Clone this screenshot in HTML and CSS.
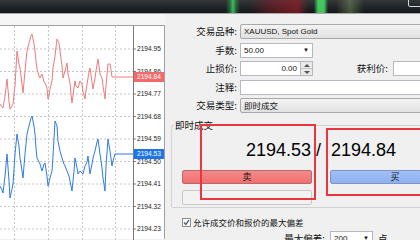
FILE: index.html
```html
<!DOCTYPE html>
<html lang="zh-CN">
<head>
<meta charset="utf-8">
<title>下单</title>
<link rel="stylesheet" href="styles.css">
</head>
<body>
<div class="topbar"><span class="winbtn"></span></div>
<div class="main">
  <div class="chart">
    <svg class="chart-svg" width="164" height="215" viewBox="0 0 164 215">
      <g class="grid">
        <line x1="0" y1="23" x2="133" y2="23"/>
        <line x1="0" y1="45.5" x2="133" y2="45.5"/>
        <line x1="0" y1="68" x2="133" y2="68"/>
        <line x1="0" y1="90.5" x2="133" y2="90.5"/>
        <line x1="0" y1="113" x2="133" y2="113"/>
        <line x1="0" y1="135.5" x2="133" y2="135.5"/>
        <line x1="0" y1="158" x2="133" y2="158"/>
        <line x1="0" y1="180.5" x2="133" y2="180.5"/>
        <line x1="0" y1="203" x2="133" y2="203"/>
        <line x1="14.5" y1="0" x2="14.5" y2="215"/>
        <line x1="48.5" y1="0" x2="48.5" y2="215"/>
        <line x1="82.5" y1="0" x2="82.5" y2="215"/>
        <line x1="115.5" y1="0" x2="115.5" y2="215"/>
      </g>
      <polyline class="ask-line" points="0,78 2,81 3,82 5,70 7,53 9,75 10,83 12,80 13,78 15,60 17,25 19,38 20,42 22,58 23,67 25,45 27,25 29,17 31,10 32,8 34,18 35,25 36,35 37,43 39,50 40,52 42,48 44,56 45,57 47,62 48,73 49,70 50,63 52,55 53,42 55,30 57,13 59,17 60,25 62,40 63,52 65,45 67,37 68,48 70,57 71,68 72,77 74,62 75,55 76,60 78,62 80,55 82,58 83,66 85,73 86,65 88,52 89,46 90,42 92,56 93,63 95,52 96,45 98,33 99,40 100,48 102,52 103,60 105,73 106,60 108,38 110,38 111,44 112,51 133,51"/>
      <polyline class="bid-line" points="0,160 2,164 3,167 5,150 7,128 9,155 10,172 12,163 13,158 15,128 17,108 19,120 20,132 22,145 23,152 25,128 27,108 29,100 31,92 32,90 34,100 35,108 36,122 37,132 39,136 40,138 42,145 44,138 45,137 47,150 48,160 50,152 52,145 53,130 55,95 57,100 58,115 60,125 62,132 64,138 65,140 67,145 69,150 71,160 72,165 74,145 75,132 77,142 78,148 80,145 83,148 85,140 87,136 88,130 89,140 90,148 92,138 93,132 95,125 97,116 98,113 100,128 102,142 103,152 105,165 106,140 108,113 110,125 112,140 113,135 115,128 133,128"/>
      <line class="axis" x1="133.5" y1="0" x2="133.5" y2="215"/>
      <g class="ticks">
        <line x1="133" y1="23" x2="136" y2="23"/>
        <line x1="133" y1="45.5" x2="136" y2="45.5"/>
        <line x1="133" y1="68" x2="136" y2="68"/>
        <line x1="133" y1="90.5" x2="136" y2="90.5"/>
        <line x1="133" y1="113" x2="136" y2="113"/>
        <line x1="133" y1="135.5" x2="136" y2="135.5"/>
        <line x1="133" y1="158" x2="136" y2="158"/>
        <line x1="133" y1="180.5" x2="136" y2="180.5"/>
        <line x1="133" y1="203" x2="136" y2="203"/>
      </g>
      <g class="labels">
        <text x="137" y="25.3">2194.95</text>
        <text x="137" y="47.8">2194.86</text>
        <text x="137" y="70.3">2194.77</text>
        <text x="137" y="92.8">2194.68</text>
        <text x="137" y="115.3">2194.59</text>
        <text x="137" y="137.8">2194.50</text>
        <text x="137" y="160.3">2194.41</text>
        <text x="137" y="182.8">2194.32</text>
        <text x="137" y="205.3">2194.23</text>
      </g>
      <rect class="ask-tag" x="134" y="46" width="30" height="10"/>
      <text class="tag-text" x="137" y="53.3">2194.84</text>
      <rect class="bid-tag" x="134" y="123" width="30" height="10"/>
      <text class="tag-text" x="137" y="130.3">2194.53</text>
    </svg>
  </div>
  <div class="panel">
    <div class="form">
      <span class="lbl">交易品种:</span>
      <div class="combo">XAUUSD, Spot Gold</div>
      <span class="lbl">手数:</span>
      <div class="field">
        <div class="input lots"><span class="val">50.00</span><span class="arrow">▼</span></div>
      </div>
      <span class="lbl">止损价:</span>
      <div class="field">
        <div class="input sl">0.00</div>
        <div class="spin"><span class="up"></span><span class="down"></span></div>
        <span class="lbl tp-lbl">获利价:</span>
        <div class="input tp"></div>
      </div>
      <span class="lbl">注释:</span>
      <div class="input comment"></div>
      <span class="lbl">交易类型:</span>
      <div class="combo cjk">即时成交</div>
    </div>
    <fieldset class="group">
      <legend class="group-title">即时成交</legend>
      <div class="prices">
        <span class="bid">2194.53</span>
        <span class="slash">/</span>
        <span class="ask">2194.84</span>
      </div>
      <div class="btns">
        <div class="btn sell">卖</div>
        <div class="btn buy">买</div>
      </div>
      <div class="blank"></div>
    </fieldset>
    <div class="check">
      <svg class="cbox" width="9" height="9" viewBox="0 0 9 9"><rect x="0.5" y="0.5" width="8" height="8" fill="#fff" stroke="#8e8f8f"/><path d="M2 4.5 L3.8 6.5 L7 2.2" fill="none" stroke="#4a5a78" stroke-width="1.3"/></svg>
      <span>允许成交价和报价的最大偏差</span>
    </div>
    <div class="dev">
      <span class="lbl dev-lbl">最大偏差:</span>
      <div class="input devin"><span class="val">200</span><span class="arrow">▼</span></div>
      <span class="unit">点</span>
    </div>
  </div>
</div>
<div class="mark m1"></div>
<div class="mark m2"></div>
</body>
</html>
```

FILE: styles.css
```css
* { box-sizing: border-box; }
html, body {
  margin: 0;
  width: 420px;
  height: 240px;
  overflow: hidden;
}
body {
  position: relative;
  background: #f0f0f0;
  font-family: "Noto Sans CJK SC", "Liberation Sans", sans-serif;
  color: #111;
}
.topbar {
  height: 13px;
  display: flex;
  justify-content: flex-end;
  background:
    linear-gradient(90deg, transparent 226px, rgba(40,160,70,.55) 230px, rgba(70,210,100,.85) 233px, rgba(40,160,70,.5) 236px, transparent 240px),
    linear-gradient(90deg, transparent 250px, rgba(140,25,35,.45) 270px, rgba(170,30,40,.6) 298px, transparent 308px),
    linear-gradient(90deg, transparent 314px, rgba(70,215,100,.9) 318px, rgba(70,215,100,.9) 324px, transparent 328px),
    linear-gradient(90deg, transparent 336px, rgba(130,160,100,.45) 350px, transparent 364px),
    linear-gradient(#33373a, #141618);
}
.winbtn {
  width: 16px;
  height: 9px;
  margin-top: -2px;
  margin-right: -4px;
  border: 1px solid #d8d8d8;
  border-radius: 2px;
}
.main {
  display: flex;
  border-top: 1px solid #a9a9a9;
  background: #f5f5f5;
  height: 226px;
}
.chart {
  flex: none;
  width: 165px;
  margin-top: 11px;
  background: #fff;
  border-top: 1px solid #a0a0a0;
  border-right: 1px solid #a0a0a0;
}
.chart-svg { display: block; }
.grid line {
  stroke: #c6c6c6;
  stroke-width: 1;
  stroke-dasharray: 2 2;
}
.axis { stroke: #7a7a7a; stroke-width: 1; }
.ticks line { stroke: #7a7a7a; }
.ask-line { fill: none; stroke: #f07a7a; stroke-width: 1; }
.bid-line { fill: none; stroke: #2f7be6; stroke-width: 1; }
.labels text {
  font-family: "Liberation Sans", sans-serif;
  font-size: 6.6px;
  fill: #222;
}
.ask-tag { fill: #f26a6a; }
.bid-tag { fill: #1f74e8; }
.tag-text {
  font-family: "Liberation Sans", sans-serif;
  font-size: 6.6px;
  fill: #fff;
}
.panel {
  flex: none;
  width: 300px;
  padding-top: 10px;
  background: #f0f0f0;
}
.form {
  display: grid;
  grid-template-columns: 72px 1fr;
  column-gap: 3px;
  row-gap: 3.5px;
  grid-auto-rows: 15px;
  align-items: center;
}
.lbl {
  font-size: 9.5px;
  text-align: right;
  white-space: nowrap;
  line-height: 15px;
}
.combo, .input {
  height: 15px;
  font-family: "Liberation Sans", "Noto Sans CJK SC", sans-serif;
  font-size: 8px;
  line-height: 13px;
  padding: 0 3px;
  white-space: nowrap;
}
.combo {
  background: linear-gradient(#f3f3f3, #e1e1e1);
  border: 1px solid #a8a8a8;
  border-radius: 2px;
}
.combo.cjk {
  font-family: "Noto Sans CJK SC", sans-serif;
  font-size: 8.5px;
}
.input {
  background: #fff;
  border: 1px solid #b5b8bf;
}
.field {
  display: flex;
  align-items: center;
  height: 15px;
}
.lots {
  width: 73px;
  display: flex;
  justify-content: space-between;
}
.arrow {
  font-size: 6px;
  line-height: 13px;
  color: #111;
}
.sl {
  width: 61px;
  text-align: right;
}
.spin {
  width: 12px;
  height: 15px;
  display: flex;
  flex-direction: column;
  border: 1px solid #b5b8bf;
  border-left: none;
  background: #e9e9e9;
}
.spin span {
  flex: 1;
}
.spin .up { border-bottom: 1px solid #c4c4c4; }
.spin .up::after, .spin .down::after {
  content: "";
  display: block;
  margin: 2px auto 0;
  width: 0;
  height: 0;
  border-left: 3px solid transparent;
  border-right: 3px solid transparent;
}
.spin .up::after { border-bottom: 3px solid #555; }
.spin .down::after { border-top: 3px solid #555; }
.tp-lbl {
  width: 75px;
  text-align: right;
}
.tp {
  margin-left: 5px;
  width: 80px;
}
.group {
  margin: 6px 0 0 6px;
  width: 280px;
  padding: 0 0 2px 10px;
  border: 1px solid #d3d3d3;
  border-radius: 2px;
}
.group-title {
  margin-left: -8px;
  padding: 0 1px;
  font-size: 9.5px;
  line-height: 12px;
}
.prices {
  display: grid;
  grid-template-columns: 130px 18px 130px;
  margin-top: 10px;
  font-family: "Liberation Sans", sans-serif;
  font-size: 18px;
  line-height: 18px;
  color: #000;
}
.bid { text-align: right; padding-right: 1px; }
.slash { text-align: center; padding-right: 5px; }
.ask { padding-left: 1px; }
.btns {
  display: grid;
  grid-template-columns: 130px 130px;
  column-gap: 18px;
  margin-top: 11px;
}
.btn {
  height: 14px;
  font-size: 9px;
  line-height: 12px;
  text-align: center;
  border-radius: 2px;
  color: #111;
}
.sell {
  background: linear-gradient(#f68a8a, #f07070);
  border: 1px solid #b86a6a;
}
.buy {
  background: linear-gradient(#a2c0f6, #8eb0f0);
  border: 1px solid #7d94c4;
}
.blank {
  margin-top: 6px;
  width: 130px;
  height: 15px;
  background: #f2f2f2;
  border: 1px solid #c9c9c9;
  border-radius: 2px;
}
.check {
  display: flex;
  align-items: center;
  gap: 2px;
  margin: 8px 0 0 17px;
  height: 12px;
  font-size: 8.5px;
  line-height: 12px;
}
.cbox { display: block; flex: none; }
.dev {
  display: flex;
  align-items: center;
  gap: 5px;
  margin-top: 3px;
}
.dev-lbl { width: 160px; }
.devin {
  width: 43px;
  display: flex;
  justify-content: space-between;
}
.unit { font-size: 9.5px; line-height: 15px; }
.mark {
  position: absolute;
  border: 2px solid #e8383e;
}
.m1 { left: 200px; top: 124px; width: 116px; height: 76px; }
.m2 { left: 326px; top: 128px; width: 100px; height: 68px; }
```
